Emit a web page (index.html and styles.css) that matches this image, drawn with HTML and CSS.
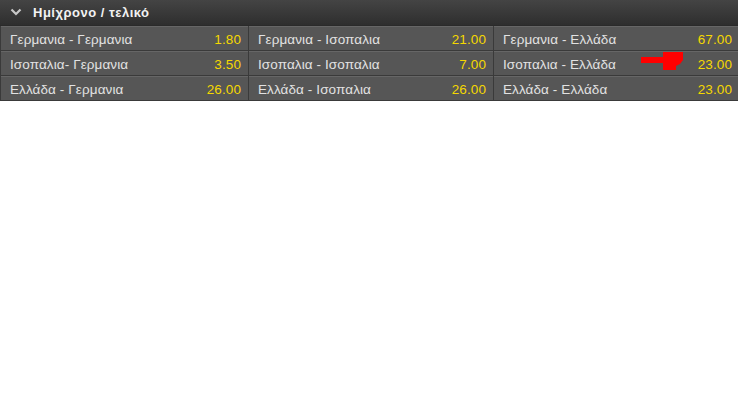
FILE: index.html
```html
<!DOCTYPE html>
<html lang="el">
<head>
  <meta charset="UTF-8">
  <title>Ημίχρονο / τελικό</title>
  <link rel="stylesheet" href="styles.css">
</head>
<body>
  <div class="market">
    <div class="market-header">
      <svg class="chevron" width="12" height="8" viewBox="0 0 12 8">
        <path d="M1.5 1.5 L6 6 L10.5 1.5" fill="none" stroke="#c8c8c8" stroke-width="2.2"/>
      </svg>
      <span class="market-title">Ημίχρονο / τελικό</span>
    </div>
    <div class="odds-grid">
      <div class="odd"><span class="name">Γερμανια - Γερμανια</span><span class="price">1.80</span></div>
      <div class="odd"><span class="name">Γερμανια - Ισοπαλια</span><span class="price">21.00</span></div>
      <div class="odd"><span class="name">Γερμανια - Ελλάδα</span><span class="price">67.00</span></div>
      <div class="odd"><span class="name">Ισοπαλια- Γερμανια</span><span class="price">3.50</span></div>
      <div class="odd"><span class="name">Ισοπαλια - Ισοπαλια</span><span class="price">7.00</span></div>
      <div class="odd marked">
        <span class="name">Ισοπαλια - Ελλάδα</span>
        <svg class="arrow" width="43" height="18" viewBox="0 0 43 18">
          <path d="M0 5 H22 V0 H42 V8 L39 12 L35 14 V18 H22 V11 H0 Z" fill="#ff0000"/>
        </svg>
        <span class="price">23.00</span>
      </div>
      <div class="odd"><span class="name">Ελλάδα - Γερμανια</span><span class="price">26.00</span></div>
      <div class="odd"><span class="name">Ελλάδα - Ισοπαλια</span><span class="price">26.00</span></div>
      <div class="odd"><span class="name">Ελλάδα - Ελλάδα</span><span class="price">23.00</span></div>
    </div>
  </div>
</body>
</html>
```

FILE: styles.css
```css
body {
  margin: 0;
  background: #fff;
  font-family: "Liberation Sans", Arial, sans-serif;
}

.market {
  width: 738px;
  background: #3a3a3a;
}

.market-header {
  height: 26px;
  display: flex;
  align-items: center;
  padding: 0 0 1px 10px;
  background: linear-gradient(#444, #2e2e2e);
  border-bottom: 1px solid #2a2a2a;
  box-sizing: border-box;
}

.chevron {
  margin-right: 11px;
}

.market-title {
  color: #f2f2f2;
  font-weight: bold;
  font-size: 13px;
  letter-spacing: 0.5px;
}

.odds-grid {
  display: grid;
  grid-template-columns: 247px 244px 245px;
  gap: 1px;
  padding: 0 0 1px 1px;
}

.odd {
  height: 24px;
  box-sizing: border-box;
  display: flex;
  align-items: center;
  padding: 1px 7px 0 9px;
  background: #565656;
  border-top: 1px solid #666;
  color: #e2e2e2;
  font-size: 13.5px;
  letter-spacing: 0.1px;
}

.name {
  flex: 1;
}

.price {
  color: #f5d800;
}

.arrow {
  margin-right: 14px;
  margin-top: -6px;
}
```
